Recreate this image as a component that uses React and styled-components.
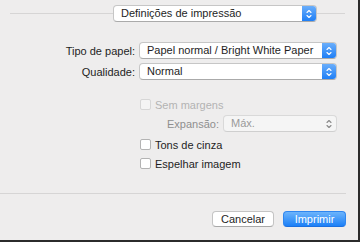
import React from "react";
import styled, { createGlobalStyle } from "styled-components";

const GlobalStyle = createGlobalStyle`
  html, body {
    margin: 0;
    padding: 0;
    background: #2b2b2b;
  }
  body {
    font-family: "Liberation Sans", Arial, sans-serif;
  }
`;

const Window = styled.div`
  width: 358px;
  height: 240px;
  background: #eeeded;
  color: #1e1e1e;
  font-size: 11px;
  display: flex;
  flex-direction: column;
`;

const Header = styled.div`
  display: flex;
  align-items: center;
  padding: 5px 13px 0 10px;
`;

const Line = styled.div`
  flex: ${(p) => (p.$width ? "none" : 1)};
  width: ${(p) => (p.$width ? `${p.$width}px` : "auto")};
  height: 1px;
  background: #d6d5d5;
`;

const Popup = styled.div`
  box-sizing: border-box;
  width: ${(p) => p.$width}px;
  height: 17px;
  display: flex;
  align-items: center;
  background: ${(p) => (p.$disabled ? "#f5f5f5" : "#fff")};
  color: ${(p) => (p.$disabled ? "#9a9a9a" : "#1e1e1e")};
  border: 1px solid ${(p) => (p.$disabled ? "#d9d9d9" : "#c6c6c6")};
  border-bottom-color: ${(p) => (p.$disabled ? "#cfcfcf" : "#aaa")};
  border-radius: 4px;
  overflow: hidden;
`;

const PopupText = styled.span`
  flex: 1;
  padding-left: 7px;
  white-space: nowrap;
  line-height: 15px;
`;

const Stepper = styled.div`
  width: 14px;
  height: 100%;
  display: flex;
  align-items: center;
  justify-content: center;
  background: ${(p) =>
    p.$disabled ? "transparent" : "linear-gradient(#6aaefb, #1f7ff6)"};
`;

const Form = styled.div`
  margin-top: 20px;
  display: grid;
  grid-template-columns: 135px 198px;
  column-gap: 4px;
  row-gap: 4px;
  align-items: center;
`;

const Label = styled.span`
  text-align: right;
  color: ${(p) => (p.$disabled ? "#8f8f8f" : "#1e1e1e")};
`;

const Options = styled.div`
  padding-left: 140px;
  display: flex;
  flex-direction: column;
`;

const CheckRow = styled.label`
  display: flex;
  align-items: center;
  gap: 4px;
  height: 11px;
  margin-top: ${(p) => p.$top}px;
  color: ${(p) => (p.$disabled ? "#b3b3b3" : "#1e1e1e")};
`;

const Box = styled.span`
  box-sizing: border-box;
  width: 11px;
  height: 11px;
  border-radius: 2px;
  background: ${(p) => (p.$disabled ? "#f4f4f4" : "#fff")};
  border: 1px solid ${(p) => (p.$disabled ? "#d6d6d6" : "#b3b3b3")};
`;

const SubRow = styled.div`
  display: flex;
  align-items: center;
  gap: 4px;
  margin-top: 5px;
  padding-left: 27px;
`;

const Separator = styled.div`
  width: 346px;
  height: 1px;
  background: #d6d5d5;
  margin-top: 24px;
`;

const Footer = styled.div`
  display: flex;
  justify-content: flex-end;
  gap: 9px;
  padding: 17px 12px 0 0;
`;

const Button = styled.button`
  box-sizing: border-box;
  width: ${(p) => p.$width}px;
  height: 16px;
  padding: 0;
  font: inherit;
  font-size: 11px;
  border-radius: 4px;
  border: 1px solid ${(p) => (p.$primary ? "#2f86f0" : "#c4c4c4")};
  border-bottom-color: ${(p) => (p.$primary ? "#1a6fe0" : "#a8a8a8")};
  background: ${(p) =>
    p.$primary ? "linear-gradient(#6db4fb, #1c80f7)" : "#fff"};
  color: ${(p) => (p.$primary ? "#fff" : "#1e1e1e")};
`;

const Chevrons = ({ color }) => (
  <svg width="6" height="10" viewBox="0 0 6 10">
    <polyline
      points="1,3.5 3,1.5 5,3.5"
      fill="none"
      stroke={color}
      strokeWidth="1.1"
      strokeLinecap="round"
      strokeLinejoin="round"
    />
    <polyline
      points="1,6.5 3,8.5 5,6.5"
      fill="none"
      stroke={color}
      strokeWidth="1.1"
      strokeLinecap="round"
      strokeLinejoin="round"
    />
  </svg>
);

const Select = ({ value, width, disabled }) => (
  <Popup $width={width} $disabled={disabled}>
    <PopupText>{value}</PopupText>
    <Stepper $disabled={disabled}>
      <Chevrons color={disabled ? "#8a8a8a" : "#fff"} />
    </Stepper>
  </Popup>
);

const Check = ({ label, top, disabled }) => (
  <CheckRow $top={top} $disabled={disabled}>
    <Box $disabled={disabled} />
    {label}
  </CheckRow>
);

export default function App() {
  return (
    <Window>
      <GlobalStyle />
      <Header>
        <Line />
        <Select value="Definições de impressão" width={204} />
        <Line $width={28} />
      </Header>

      <Form>
        <Label>Tipo de papel:</Label>
        <Select value="Papel normal / Bright White Paper" width={198} />
        <Label>Qualidade:</Label>
        <Select value="Normal" width={198} />
      </Form>

      <Options>
        <Check label="Sem margens" top={19} disabled />
        <SubRow>
          <Label $disabled>Expansão:</Label>
          <Select value="Máx." width={114} disabled />
        </SubRow>
        <Check label="Tons de cinza" top={7} />
        <Check label="Espelhar imagem" top={8} />
      </Options>

      <Separator />

      <Footer>
        <Button $width={62}>Cancelar</Button>
        <Button $width={63} $primary>
          Imprimir
        </Button>
      </Footer>
    </Window>
  );
}
